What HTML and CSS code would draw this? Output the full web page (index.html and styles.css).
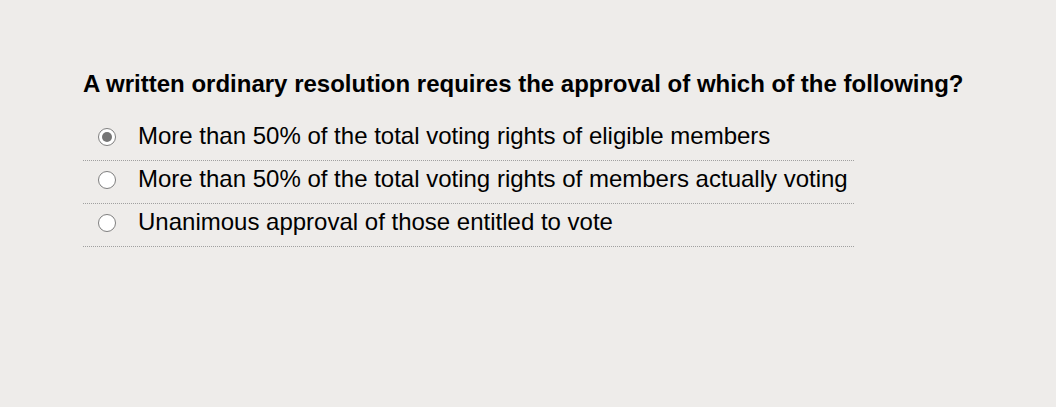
FILE: index.html
```html
<!DOCTYPE html>
<html>
<head>
<meta charset="utf-8">
<link rel="stylesheet" href="styles.css">
</head>
<body>
<div class="quiz">
  <div class="question">A written ordinary resolution requires the approval of which of the following?</div>
  <ul class="options">
    <li class="option"><span class="radio checked"></span><span class="label">More than 50% of the total voting rights of eligible members</span></li>
    <li class="option"><span class="radio"></span><span class="label">More than 50% of the total voting rights of members actually voting</span></li>
    <li class="option"><span class="radio"></span><span class="label">Unanimous approval of those entitled to vote</span></li>
  </ul>
</div>
</body>
</html>
```
FILE: styles.css
```css
html, body {
  margin: 0;
  padding: 0;
  background: #eeecea;
  height: 100%;
}
body {
  font-family: "Liberation Sans", Arial, sans-serif;
  color: #000;
}
.quiz {
  padding: 70px 0 0 83px;
}
.question {
  font-size: 24px;
  font-weight: bold;
  line-height: 28px;
  margin: 0 0 20px 0;
}
.options {
  list-style: none;
  margin: 0;
  padding: 0;
  width: 771px;
}
.option {
  display: flex;
  align-items: flex-start;
  border-bottom: 1px dotted #a0a0a0;
  padding: 0 0 6px 0;
  font-size: 24px;
  line-height: 36px;
}
.radio {
  box-sizing: border-box;
  width: 18px;
  height: 18px;
  border: 1.5px solid #7f7f7f;
  border-radius: 50%;
  background: #fff;
  margin: 10px 22px 0 15px;
  flex: none;
  display: flex;
  align-items: center;
  justify-content: center;
}
.radio.checked::after {
  content: "";
  width: 10px;
  height: 10px;
  border-radius: 50%;
  background: #757575;
}
```
